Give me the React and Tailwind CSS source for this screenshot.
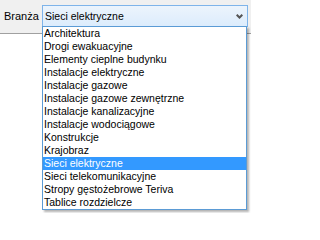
const items = [
  'Architektura',
  'Drogi ewakuacyjne',
  'Elementy cieplne budynku',
  'Instalacje elektryczne',
  'Instalacje gazowe',
  'Instalacje gazowe zewnętrzne',
  'Instalacje kanalizacyjne',
  'Instalacje wodociągowe',
  'Konstrukcje',
  'Krajobraz',
  'Sieci elektryczne',
  'Sieci telekomunikacyjne',
  'Stropy gęstożebrowe Teriva',
  'Tablice rozdzielcze',
];

const selected = 'Sieci elektryczne';

export default function App() {
  return (
    <div
      className="relative w-[251px] h-[213px] overflow-hidden bg-white text-[10.5px] leading-none text-black"
      style={{ fontFamily: '"Liberation Sans", Arial, sans-serif' }}
    >
      <div className="h-[34px] bg-[#f0f0f0] border-b border-[#a0a0a0] flex items-start pt-[5px]">
        <span className="w-[42px] pl-[4px] h-[22px] flex items-center text-[11px]">Branża</span>
        <div className="w-[206px] h-[22px] border border-[#7eb4ea] bg-gradient-to-b from-[#ecf4fc] to-[#dcecfc] flex items-center justify-between pl-[2px] pr-[4px]">
          <span>Sieci elektryczne</span>
          <svg width="7" height="5" viewBox="0 0 7 5" className="mt-[1px]">
            <path d="M0.7 0.7 L3.5 3.5 L6.3 0.7" fill="none" stroke="#555" strokeWidth="2" />
          </svg>
        </div>
      </div>

      {/* otwarta lista */}
      <ul className="absolute left-[42px] top-[26px] w-[205px] border border-[#5b9bd5] bg-white shadow-[2px_2px_2px_rgba(0,0,0,0.3)]">
        {items.map((item) => (
          <li
            key={item}
            className={`h-[13px] flex items-center pl-[1px] whitespace-nowrap ${item === selected ? 'bg-[#3399ff] text-white' : ''}`}
          >
            {item}
          </li>
        ))}
      </ul>
    </div>
  );
}
